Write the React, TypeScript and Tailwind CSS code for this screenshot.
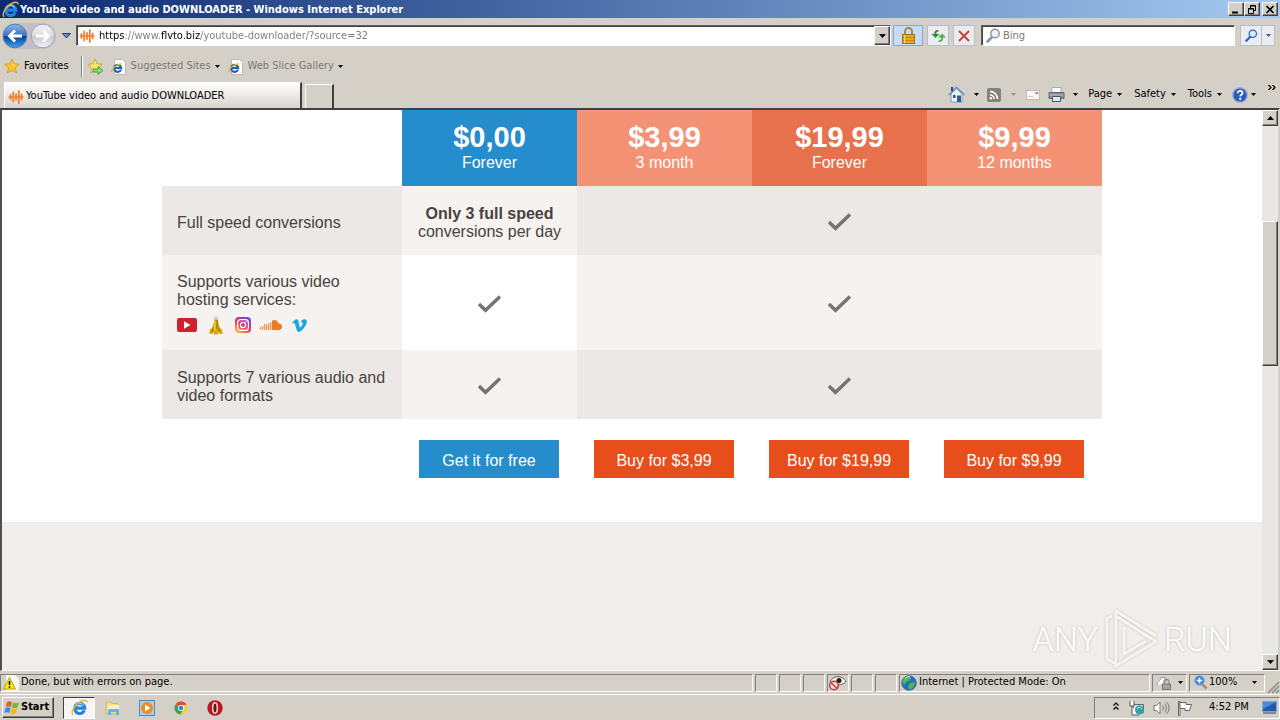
import type { ReactNode } from "react";
import { FaVimeoV } from "react-icons/fa";

/* ---------- icons ---------- */

function IeIcon({ size = 16 }: { size?: number }) {
  return (
    <svg width={size} height={size} viewBox="0 0 16 16" className="shrink-0" aria-hidden="true">
      <path d="M12.6 10.8A4.800 4.800 0 1 1 13 8.600H4.200" fill="none" stroke="#2484e0" strokeWidth="2.900" />
      <path d="M4.200 6.400A4.300 4.300 0 0 1 11.800 6" fill="none" stroke="#8fd2fb" strokeWidth="1.100" />
      <path d="M2 14.800C-.6 12.800 3 6.400 7.600 3.200 11.400.6 15.400.2 15 3.400" fill="none" stroke="#f2b824" strokeWidth="1.300" />
    </svg>
  );
}

function IePage() {
  return (
    <svg width="16" height="16" viewBox="0 0 16 16" className="shrink-0" aria-hidden="true">
      <path d="M3.500.5h8l3 3v12h-11z" fill="#fff" stroke="#b9b9b9" />
      <path d="M10 10.600A3.500 3.500 0 1 1 10.200 9H3.400" fill="none" stroke="#1b64b8" strokeWidth="2.200" />
      <path d="M1 13.500C0 11 4 6 10.500 4.600" fill="none" stroke="#e7b42c" strokeWidth="1.200" />
    </svg>
  );
}

function WaveIcon() {
  return (
    <svg width="16" height="16" viewBox="0 0 16 16" className="shrink-0" aria-hidden="true">
      <path d="M2.500 6v4M5.200 3.500v9M8 5v6M10.800 2v12M13.500 5.500v5" stroke="#f08030" strokeWidth="1.800" strokeLinecap="round" />
      <path d="M.5 8h15" stroke="#f08030" strokeWidth="1.600" />
    </svg>
  );
}

function Star({ arrow = false }: { arrow?: boolean }) {
  return (
    <svg width="17" height="17" viewBox="0 0 17 17" className="shrink-0" aria-hidden="true">
      <path d="M8 1l2.100 4.800 5.200.5-3.900 3.500 1.200 5.200L8 12.300 3.400 15l1.200-5.200L.7 6.300l5.200-.5z" fill={arrow ? "#f6e36a" : "#fcc52f"} stroke={arrow ? "#c9a53a" : "#d89a22"} strokeWidth=".9" />
      <path d="M8 3.200l1.300 3.300 3 .4-3.300.6z" fill="#fff3b0" />
      {arrow && <path d="M6 11h5V8.500l5 4-5 4V14H6z" fill="#7fe06a" stroke="#2f9a33" strokeWidth=".8" />}
    </svg>
  );
}

function Caret({ tone = "text-black" }: { tone?: string }) {
  return (
    <svg width="5" height="3" viewBox="0 0 5 3" className={`shrink-0 ${tone}`} aria-hidden="true">
      <path d="M0 0h5L2.500 3z" fill="currentColor" />
    </svg>
  );
}

function RoundArrow({ forward = false }: { forward?: boolean }) {
  return (
    <svg width="26" height="26" viewBox="0 0 26 26" aria-hidden="true">
      <defs>
        <linearGradient id={forward ? "fwd" : "bck"} x1="0" y1="0" x2="0" y2="1">
          <stop offset="0" stopColor={forward ? "#f2f2f6" : "#8fb7e8"} />
          <stop offset=".48" stopColor={forward ? "#dcdce2" : "#3b74c4"} />
          <stop offset=".52" stopColor={forward ? "#c4c6d2" : "#0d3f96"} />
          <stop offset="1" stopColor={forward ? "#f4f4f8" : "#3fa4ee"} />
        </linearGradient>
      </defs>
      <circle cx="13" cy="13" r="11.800" fill={forward ? "url(#fwd)" : "url(#bck)"} stroke={forward ? "#9fa4b4" : "#5a78b0"} />
      <path d={forward ? "M6 13h12M13 7.500l5.500 5.500-5.500 5.500" : "M20 13H8M13 7.500L7.500 13l5.500 5.500"} fill="none" stroke="#fff" strokeWidth="2.800" />
    </svg>
  );
}

function Magnifier({ color = "#2d62c8", glass = "#dcecff", size = 15 }: { color?: string; glass?: string; size?: number }) {
  return (
    <svg width={size} height={size} viewBox="0 0 15 15" className="shrink-0" aria-hidden="true">
      <path d="M1.500 13.500L6 9" stroke={color} strokeWidth="2.600" strokeLinecap="round" />
      <circle cx="9" cy="5.500" r="4.200" fill={glass} stroke={color} strokeWidth="1.400" />
    </svg>
  );
}

function Check() {
  return (
    <svg width="24" height="18" viewBox="0 0 24 18" className="mx-auto mt-[3px] block" role="img" aria-label="Included">
      <path d="M1 9L7.500 15.300 22 1.400" fill="none" stroke="#777371" strokeWidth="3.400" />
    </svg>
  );
}

function HostingIcons() {
  return (
    <div className="mt-2 flex h-4 items-center">
      <svg width="20" height="14" viewBox="0 0 20 14" aria-hidden="true">
        <rect width="20" height="14" rx="2" fill="#cf2030" />
        <path d="M7 3.300v7.400L13.500 7z" fill="#fff" />
      </svg>
      <svg width="14" height="20" viewBox="0 0 14 20" className="ml-3" aria-hidden="true">
        <path d="M4.500 3L7 .8 9.500 3v2h-5z" fill="#d4d4d0" />
        <path d="M5.500 4.500h3l1.500 6 1.200 2.500 2.300 2.500V19h-3l-.5-2.500L9 19.500H5L4 16.500 3.500 19h-3v-3.500L2.800 13 4 10.500z" fill="#d3a90f" />
        <path d="M8.200 5v9M3.800 13.500V17M10.200 13.500V17" stroke="#7d640c" strokeWidth=".9" />
        <path d="M5.800 6v10" stroke="#f7dd4e" />
      </svg>
      <svg width="16" height="16" viewBox="0 0 16 16" className="ml-3" aria-hidden="true">
        <defs>
          <linearGradient id="insta" x1=".2" y1="1" x2=".8" y2="0">
            <stop offset="0" stopColor="#fdb94a" />
            <stop offset=".4" stopColor="#ee4556" />
            <stop offset=".7" stopColor="#c034a8" />
            <stop offset="1" stopColor="#5a4fd8" />
          </linearGradient>
        </defs>
        <rect width="16" height="16" rx="4" fill="url(#insta)" />
        <rect x="2.600" y="2.600" width="10.800" height="10.800" rx="3" fill="none" stroke="#fff" strokeWidth="1.200" />
        <circle cx="8" cy="8" r="2.600" fill="none" stroke="#fff" strokeWidth="1.200" />
        <circle cx="11.200" cy="4.800" r=".7" fill="#fff" />
      </svg>
      <svg width="22" height="12" viewBox="0 0 22 12" className="ml-[9px]" aria-hidden="true">
        <path d="M.7 8v2.500M2.700 7v4M4.700 5v6M6.700 5v6M8.700 4.500V11M10.700 3v8" stroke="#ea8a3c" strokeWidth="1.100" />
        <path d="M12 11V1.500C15 0 18 1.600 18.500 4.600 20.500 4.200 22 5.800 22 7.700 22 9.600 20.600 11 18.800 11z" fill="#ea7d28" />
      </svg>
      <FaVimeoV size={17} className="ml-[9px] text-[#21a6e4]" aria-hidden="true" />
    </div>
  );
}

/* ---------- browser chrome ---------- */

const RAISED = "border border-t-white border-l-white border-r-[#404040] border-b-[#404040] bg-[#d4d0c8] shadow-[inset_-1px_-1px_0_#808080]";

function CaptionButton({ label, children }: { label: string; children: ReactNode }) {
  return (
    <button aria-label={label} className={`flex h-3.5 w-4 items-center justify-center ${RAISED}`}>
      <svg width="10" height="9" viewBox="0 0 10 9" stroke="#000" fill="none" aria-hidden="true">{children}</svg>
    </button>
  );
}

function TitleBar() {
  return (
    <header className="flex h-[18px] shrink-0 items-center bg-linear-to-r from-[#0d2870] to-[#a6caf0] px-0.5">
      <IeIcon size={17} />
      <h1 className="flex-1 pl-px pt-0.5 text-[11px] font-bold text-white">YouTube video and audio DOWNLOADER - Windows Internet Explorer</h1>
      <CaptionButton label="Minimize"><path d="M1 7.500h6" strokeWidth="2" /></CaptionButton>
      <CaptionButton label="Restore"><path d="M3.500 3V.5h5v5H7M3.500 1h5M1.500 3.500h5v5h-5zM1 4h6" /></CaptionButton>
      <span className="w-0.5" />
      <CaptionButton label="Close"><path d="M1.500 1l7 7M8.500 1l-7 7" strokeWidth="1.700" /></CaptionButton>
    </header>
  );
}

const FIELD = "border border-t-[#606060] border-l-[#606060] border-r-white border-b-white bg-white shadow-[inset_1px_1px_0_#404040]";
const NAVBTN = "flex h-[21px] items-center justify-center border border-[#b9bdc9] bg-[#ebebf0]";

function NavRow() {
  return (
    <div className="flex h-[35px] shrink-0 items-center pl-0.5 pr-[5px]">
      <div className="flex items-center gap-0.5 rounded-full bg-[#c2c0c6]">
        <button aria-label="Back"><RoundArrow /></button>
        <button aria-label="Forward"><RoundArrow forward /></button>
      </div>
      <button aria-label="Recent pages" className="flex w-5 justify-center">
        <svg width="9" height="6" viewBox="0 0 9 6" aria-hidden="true"><path d="M.5.5h8l-4 4.500z" fill="#4a8fd0" stroke="#1f3f70" /></svg>
      </button>
      <form className={`flex h-[21px] flex-1 items-center pl-0.5 ${FIELD}`} onSubmit={(e) => e.preventDefault()}>
        <WaveIcon />
        <input
          aria-label="Address"
          defaultValue="https://www.flvto.biz/youtube-downloader/?source=32"
          className="min-w-0 flex-1 bg-[linear-gradient(90deg,#000_0_29px,#7a7a7a_29px_65px,#000_65px_105px,#7a7a7a_105px)] bg-clip-text pl-1 pt-0.5 text-[11px] text-transparent outline-none"
        />
        <button type="button" aria-label="Show address list" className={`flex h-[19px] w-4 items-center justify-center ${RAISED}`}>
          <svg width="7" height="4" viewBox="0 0 7 4" aria-hidden="true"><path d="M0 0h7L3.500 4z" /></svg>
        </button>
      </form>
      <button aria-label="Security report" className="ml-0.5 flex h-[21px] w-[30px] items-center justify-center border border-[#86a8dc] bg-[#c8dcf8]">
        <svg width="15" height="17" viewBox="0 0 15 17" aria-hidden="true">
          <path d="M4 8V4.500a3.500 3.500 0 0 1 7 0V8" fill="none" stroke="#a98a3c" strokeWidth="2" />
          <rect x="1.500" y="7.500" width="12" height="9" fill="#e8a91c" stroke="#a87212" />
          <path d="M2 10.500h11M2 13.500h11" stroke="#bd8416" />
          <path d="M3.500 8v8" stroke="#ffe28a" />
        </svg>
      </button>
      <button aria-label="Refresh" className={`ml-1 w-[22px] ${NAVBTN}`}>
        <svg width="15" height="14" viewBox="0 0 15 14" aria-hidden="true">
          <path d="M7.500 1C4.800.5 3.300 2 3.300 5H.5l4 4 4-4H5.300c0-1.500.6-2.500 2.200-2.500z" fill="#2f8f35" />
          <path d="M7.500 13c2.700.5 4.700-1 4.700-4.500H15l-4-4-4 4h3.200c0 2-.8 3-2.700 3z" fill="#4fb450" />
        </svg>
      </button>
      <button aria-label="Stop" className={`ml-1 w-[22px] ${NAVBTN}`}>
        <svg width="12" height="12" viewBox="0 0 12 12" stroke="#c8423c" strokeWidth="2" aria-hidden="true"><path d="M1 1l10 10M11 1L1 11" /></svg>
      </button>
      <div className={`ml-1.5 flex h-[21px] w-[254px] items-center pl-1 ${FIELD}`}>
        <Magnifier color="#8596ac" glass="#eef3f9" />
        <input aria-label="Search" placeholder="Bing" className="min-w-0 flex-1 pl-0.5 pt-0.5 text-[11px] outline-none placeholder:text-[#777]" />
      </div>
      <button aria-label="Search the web" className={`ml-[5px] w-[22px] ${NAVBTN}`}><Magnifier size={13} /></button>
      <button aria-label="Search options" className={`w-[13px] border-l-0 ${NAVBTN}`}><Caret tone="text-[#2c5f9f]" /></button>
    </div>
  );
}

function FavoritesRow() {
  return (
    <nav aria-label="Favorites" className="flex h-[26px] shrink-0 items-center pl-1 pt-px text-[11px]">
      <button className="flex items-center gap-[3px]"><Star />Favorites</button>
      <span className="ml-3 h-[21px] w-0.5 border-l border-[#808080] bg-white" />
      <button aria-label="Add to favorites bar" className="ml-1"><Star arrow /></button>
      <button className="ml-[7px] flex items-center gap-1 text-[#7a7873]"><IePage />Suggested Sites<Caret /></button>
      <button className="ml-2 flex items-center gap-1 text-[#7a7873]"><IePage />Web Slice Gallery<Caret /></button>
    </nav>
  );
}

function TabRow() {
  return (
    <div className="flex h-[29px] shrink-0 items-end pl-1">
      <button className="flex h-[26px] w-[298px] items-center gap-0.5 border-r-2 border-r-[#404040] border-l border-t border-l-white border-t-white bg-linear-to-b from-white to-[#d8d5ce] pl-[3px] pt-0.5 text-[11px]">
        <WaveIcon />YouTube video and audio DOWNLOADER
      </button>
      <button aria-label="New tab" className="ml-[3px] h-6 w-[29px] border-l border-r-2 border-t border-l-white border-r-[#404040] border-t-white" />
      <div className="flex h-[29px] flex-1 items-center justify-end pr-1 pt-0.5 text-[11px]">
        <button aria-label="Home" className="flex items-center gap-2">
          <svg width="18" height="17" viewBox="0 0 18 17" aria-hidden="true">
            <path d="M3 8v8h11V8L8.500 2.500z" fill="#eef4fc" stroke="#7e98c0" />
            <path d="M.8 9L8.500 1.200 16.500 9" fill="none" stroke="#6f90c4" strokeWidth="1.500" />
            <path d="M3 1h2v4H3z" fill="#26466e" /><path d="M9 9.500h4V16H9z" fill="#2a6094" /><path d="M5 9h2.500v3H5z" fill="#34537c" />
          </svg>
          <Caret />
        </button>
        <button aria-label="Feeds" className="ml-2 flex items-center gap-2.5">
          <svg width="14" height="14" viewBox="0 0 14 14" aria-hidden="true">
            <rect width="14" height="14" rx="2" fill="#85837f" />
            <path d="M3 7a4 4 0 0 1 4 4M3 3.500a7.500 7.500 0 0 1 7.500 7.500" fill="none" stroke="#fff" strokeWidth="1.600" /><circle cx="3.800" cy="10.300" r="1.200" fill="#fff" />
          </svg>
          <Caret tone="text-[#9a968e]" />
        </button>
        <button aria-label="Read mail" className="ml-2.5">
          <svg width="14" height="10" viewBox="0 0 14 10" className="block" aria-hidden="true"><rect x=".5" y=".5" width="13" height="9" fill="#faf8f7" stroke="#c7b8b8" /><path d="M9.500 2h2.500v2H9.500z" fill="#d46868" /><path d="M2 6.500h5" stroke="#c9c9c9" /></svg>
        </button>
        <button aria-label="Print" className="ml-2 flex items-center gap-2">
          <svg width="17" height="15" viewBox="0 0 17 15" aria-hidden="true">
            <path d="M4 .5h9V6H4z" fill="#fff" stroke="#aaa" /><path d="M1 5.500h15v6H1z" fill="#8a8d93" stroke="#64676d" /><path d="M1.500 8h14" stroke="#b9bdc4" /><path d="M4.500 9.500h8v5h-8z" fill="#dceafa" stroke="#555" />
          </svg>
          <Caret />
        </button>
        <button className="ml-2.5 flex items-center gap-[5px]">Page<Caret /></button>
        <button className="ml-3 flex items-center gap-[5px]">Safety<Caret /></button>
        <button className="ml-3 flex items-center gap-[5px]">Tools<Caret /></button>
        <button aria-label="Help" className="ml-2.5 flex items-center gap-[3px]">
          <svg width="16" height="16" viewBox="0 0 16 16" aria-hidden="true">
            <circle cx="8" cy="8" r="7.300" fill="#2a5cb8" stroke="#9fb0d4" strokeWidth="1.400" />
            <path d="M5.700 6.200c0-3.200 4.800-3 4.800-.2 0 1.700-2.300 1.700-2.300 3.500" fill="none" stroke="#fff" strokeWidth="1.800" /><circle cx="8.200" cy="11.900" r="1.100" fill="#fff" />
          </svg>
          <Caret />
        </button>
        <button aria-label="More commands" className="mb-3.5 ml-3">
          <svg width="8" height="5" viewBox="0 0 8 5" className="block" fill="none" stroke="#000" strokeWidth="1.200" aria-hidden="true"><path d="M.5 0L3 2.500.500 5M4.500 0L7 2.500 4.500 5" /></svg>
        </button>
      </div>
    </div>
  );
}

/* ---------- page ---------- */

const PLANS = [
  { price: "$0,00", term: "Forever", head: "bg-[#268dcd]", action: "Get it for free", button: "bg-[#268dcd]" },
  { price: "$3,99", term: "3 month", head: "bg-[#f49276]", action: "Buy for $3,99", button: "bg-[#e84e1b]" },
  { price: "$19,99", term: "Forever", head: "bg-[#e8714d]", action: "Buy for $19,99", button: "bg-[#e84e1b]" },
  { price: "$9,99", term: "12 months", head: "bg-[#f49276]", action: "Buy for $9,99", button: "bg-[#e84e1b]" },
];

function PricingTable() {
  return (
    <table className="mx-auto w-[940px] table-fixed border-collapse text-base leading-[18px] text-[#474341]">
      <colgroup>
        <col className="w-60" /><col /><col /><col /><col />
      </colgroup>
      <thead>
        <tr className="h-[76px]">
          <td />
          {PLANS.map((p) => (
            <th key={p.action} scope="col" className={`px-0 pb-1 pt-0 text-center font-normal text-white ${p.head}`}>
              <div className="text-[29px] font-bold leading-[34px]">{p.price}</div>
              <div>{p.term}</div>
            </th>
          ))}
        </tr>
      </thead>
      <tbody>
        <tr className="h-[69px] bg-[#ece8e5]">
          <th scope="row" className="px-[15px] py-0 pt-1 text-left font-normal">Full speed conversions</th>
          <td className="bg-[#f5f2ef] p-0 pt-1 text-center"><b>Only 3 full speed</b><br />conversions per day</td>
          <td colSpan={3} className="p-0"><Check /></td>
        </tr>
        <tr className="h-[95px] bg-[#f5f2ef]">
          <th scope="row" className="px-[15px] py-0 pt-px text-left font-normal">Supports various video<br />hosting services:<HostingIcons /></th>
          <td className="bg-white p-0"><Check /></td>
          <td colSpan={3} className="p-0"><Check /></td>
        </tr>
        <tr className="h-[69px] bg-[#ece8e5]">
          <th scope="row" className="px-[15px] py-0 pt-1 text-left font-normal">Supports 7 various audio and video formats</th>
          <td className="bg-[#f5f2ef] p-0"><Check /></td>
          <td colSpan={3} className="p-0"><Check /></td>
        </tr>
      </tbody>
      <tfoot>
        <tr>
          <td />
          {PLANS.map((p) => (
            <td key={p.action} className="pb-11 pl-[17px] pr-[18px] pt-[21px]">
              <button className={`block h-[38px] w-full pt-1 text-white ${p.button}`}>{p.action}</button>
            </td>
          ))}
        </tr>
      </tfoot>
    </table>
  );
}

function ScrollBar() {
  const arrow = `flex h-4 w-4 shrink-0 items-center justify-center ${RAISED}`;
  return (
    <div className="flex w-4 shrink-0 flex-col bg-[#e9e7e3]">
      <button aria-label="Scroll up" className={arrow}><svg width="7" height="4" viewBox="0 0 7 4" aria-hidden="true"><path d="M0 4h7L3.500 0z" /></svg></button>
      <div className="flex-[95]" />
      <div className={`flex-[144] ${RAISED}`} />
      <div className="flex-[289]" />
      <button aria-label="Scroll down" className={arrow}><svg width="7" height="4" viewBox="0 0 7 4" aria-hidden="true"><path d="M0 0h7L3.500 4z" /></svg></button>
    </div>
  );
}

function Watermark() {
  return (
    <div className="absolute bottom-0 right-[46px] flex items-center gap-1 font-[Roboto,'Liberation_Sans',sans-serif] text-[34px] font-light leading-[60px] text-white [text-shadow:0_0_3px_#bdbab7]">
      <span>ANY</span>
      <svg width="58" height="62" viewBox="0 0 58 62" fill="none" className="drop-shadow-[0_0_1px_#b5b2af]" aria-hidden="true">
        <path d="M10 8L5 10.500V51L14 56M14 57V3L54 28M14 8L53 33M22 19V46L44 33M12 59L55 33" stroke="#fff" strokeWidth="3" strokeLinejoin="round" opacity=".8" />
      </svg>
      <span>RUN</span>
    </div>
  );
}

/* ---------- status bar and taskbar ---------- */

const PANEL = "flex h-[18px] items-center border border-t-[#808080] border-l-[#808080] border-r-white border-b-white";

function StatusBar() {
  return (
    <footer className="flex h-[23px] shrink-0 items-center gap-0.5 text-[11px]">
      <div className={`flex-1 gap-0.5 pl-0.5 ${PANEL}`}>
        <svg width="16" height="16" viewBox="0 0 16 16" aria-hidden="true"><path d="M3 0h9l4 4v12H3z" fill="#f7f7f4" /><path d="M6.500 2.500L12.500 14H.5z" fill="#f8e81c" stroke="#b8a20c" /><path d="M6.500 6v4M6.500 11.300v1.400" stroke="#000" strokeWidth="1.500" /></svg>
        Done, but with errors on page.
      </div>
      <div className={`w-[22px] ${PANEL}`} />
      <div className={`w-[22px] ${PANEL}`} />
      <div className={`w-[22px] ${PANEL}`} />
      <div className={`w-[22px] ${PANEL}`}>
        <svg width="19" height="16" viewBox="0 0 19 16" aria-hidden="true">
          <path d="M2 6.500C6 0 14 0 18 6.500 14 11 6 11 2 6.500z" fill="#fff" stroke="#555" /><circle cx="11" cy="5.500" r="2.600" fill="#222" />
          <circle cx="6" cy="10.500" r="4.300" fill="#f5e2e0" stroke="#c8403c" strokeWidth="1.600" /><path d="M3 7.500l6 6" stroke="#c8403c" strokeWidth="1.600" />
        </svg>
      </div>
      <div className={`w-[22px] ${PANEL}`} />
      <div className={`w-[22px] ${PANEL}`} />
      <div className={`w-[251px] gap-0.5 pl-px ${PANEL}`}>
        <svg width="16" height="16" viewBox="0 0 16 16" aria-hidden="true"><circle cx="8" cy="8" r="7.300" fill="#2270c0" stroke="#3a74ac" /><path d="M3 3c3-2 6-2 7 0L8 6 5 7 3.500 10 1.200 7zM9 8l5-1-1 4-4 4-2-3z" fill="#52b848" /><path d="M4 3.500a6 6 0 0 1 5-2" stroke="#c8e8fa" fill="none" /></svg>
        Internet | Protected Mode: On
      </div>
      <button aria-label="Protected mode settings" className={`w-[35px] justify-center gap-1.5 ${PANEL}`}>
        <svg width="16" height="14" viewBox="0 0 16 14" aria-hidden="true"><path d="M1 9C1 5 4 6 5 1.500h4V7" fill="#fff" stroke="#9a9a9a" /><path d="M8 8V6a2.500 2.500 0 0 1 5 0v2" fill="none" stroke="#8a8a8a" strokeWidth="1.300" /><path d="M6.500 8h8v5.500h-8z" fill="#a3a3a3" stroke="#747474" /></svg>
        <Caret />
      </button>
      <button className={`w-[76px] gap-px pl-1 ${PANEL}`}>
        <svg width="14" height="15" viewBox="0 0 14 15" aria-hidden="true"><path d="M8 9l4.500 4.500" stroke="#a8905c" strokeWidth="2.500" /><circle cx="5.500" cy="5.500" r="4.800" fill="#3a86dc" stroke="#84aede" /><path d="M5.500 2.800v5.400M2.800 5.500h5.400" stroke="#fff" strokeWidth="1.500" /></svg>
        <span className="flex-1 text-left">100%</span>
        <span className="pr-[7px]"><Caret /></span>
      </button>
      <svg width="13" height="14" viewBox="0 0 13 14" className="self-end" stroke="#8b8780" strokeWidth="1.500" aria-hidden="true"><path d="M1 13L12 2M5 13l7-7M9 13l3-3" /></svg>
    </footer>
  );
}

function TaskBar() {
  return (
    <div className="flex h-[26px] shrink-0 items-center border-t border-white pl-0.5 text-[11px]">
      <button className={`flex h-[21px] w-[52px] items-center gap-px pl-px font-bold ${RAISED}`}>
        <svg width="16" height="16" viewBox="0 0 16 16" aria-hidden="true">
          <path d="M3 2c2-1 3-1 5 0L6.800 7c-2-1-3-1-5 0z" fill="#e85a26" /><path d="M9 2.500c2 1 4 1 6 0L13.500 7.500c-2 1-4 1-5.700 0z" fill="#78b82c" />
          <path d="M1.500 8c2-1 3-1 5 0L5.300 13c-2-1-3-1-5 0z" fill="#3b8fd8" /><path d="M7.500 8.500c2 1 4 1 5.800 0L12 13.500c-2 1-4 1-5.800 0z" fill="#f6b81e" />
        </svg>
        Start
      </button>
      <button aria-label="Internet Explorer" className="ml-[9px] flex h-[22px] w-8 items-center justify-center border border-b-white border-l-[#404040] border-r-white border-t-[#404040] bg-[#f6f5f3]"><IeIcon size={17} /></button>
      <button aria-label="File explorer" className="ml-2.5 flex w-4 justify-center">
        <svg width="16" height="16" viewBox="0 0 16 16" aria-hidden="true"><path d="M1 2h5l1 1.500h6V14H1z" fill="#f3dc82" stroke="#d5b75a" /><path d="M3 5h11v5H3z" fill="#fbf0bf" /><path d="M3 15v-4.500c0-1 .5-1.500 1.500-1.500h8c1 0 1.500.5 1.500 1.500V15h-3v-3H6v3z" fill="#62b3e6" /></svg>
      </button>
      <button aria-label="Media player" className="ml-[18px] flex w-4 justify-center">
        <svg width="16" height="16" viewBox="0 0 16 16" aria-hidden="true"><rect x=".5" y=".5" width="15" height="15" fill="#a7d0f0" stroke="#4a8ac6" /><circle cx="8" cy="8" r="6" fill="#f48a1c" /><path d="M6 4.500v7L11.500 8z" fill="#fff" /></svg>
      </button>
      <button aria-label="Chrome" className="ml-[18px] flex w-4 justify-center">
        <svg width="14" height="14" viewBox="0 0 16 16" aria-hidden="true"><circle cx="8" cy="8" r="7.500" fill="#f9cf36" /><path d="M8 8L1.500 4.250A7.500 7.500 0 0 1 14.500 4.250L8 4.500z" fill="#de4a3c" /><path d="M1.500 4.250A7.500 7.500 0 0 0 7.500 15.500L10.500 10 8 8z" fill="#38a458" /><circle cx="8" cy="8" r="3.500" fill="#fff" /><circle cx="8" cy="8" r="2.700" fill="#3f7fe8" /></svg>
      </button>
      <button aria-label="Opera" className="ml-[18px] flex w-4 justify-center">
        <svg width="16" height="16" viewBox="0 0 16 16" aria-hidden="true"><circle cx="8" cy="8" r="7.700" fill="#b8181f" /><ellipse cx="8" cy="8" rx="2.300" ry="5.200" fill="#7c0a10" stroke="#f6dada" strokeWidth="1.500" /></svg>
      </button>
      <div className="flex-1" />
      <div className="flex h-[22px] w-[186px] items-center border border-b-white border-l-[#808080] border-r-white border-t-[#808080] pl-[18px]">
        <svg width="6" height="8" viewBox="0 0 6 8" className="mb-1" fill="none" stroke="#000" strokeWidth="1.200" aria-hidden="true"><path d="M.5 3.500L3 1l2.500 2.500M.5 7.500L3 5l2.500 2.500" /></svg>
        <svg width="16" height="16" viewBox="0 0 16 16" className="ml-2.5" aria-hidden="true"><path d="M4.500 4.500h10v8h-10z" fill="#cfe7ec" stroke="#5b6a6e" /><path d="M1 1v5h4V1M3 6v9h7" fill="#fff" stroke="#555" /><circle cx="10.500" cy="10" r="4.500" fill="#3c9fae" /><path d="M8 9c2-3 4-1 5 0" stroke="#bdeef0" fill="none" /></svg>
        <svg width="17" height="16" viewBox="0 0 17 16" className="ml-2" fill="none" stroke="#777" aria-hidden="true"><path d="M1 5.500h2.500L7 2v12l-3.500-3.500H1z" fill="#fff" /><path d="M9.500 5.500c1.300 1.500 1.300 3.500 0 5M11.500 3.500c2.300 2.500 2.300 6.500 0 9M13.500 2c3.300 3.500 3.300 8.500 0 12" /></svg>
        <svg width="16" height="16" viewBox="0 0 16 16" className="ml-[7px]" fill="#fff" stroke="#666" aria-hidden="true"><path d="M1.500 1.500h1.500v14H1.500z" /><path d="M3 2.500h6v2h5.500l-2 6H8v-2H3z" /></svg>
        <span className="ml-4 flex-1">4:52 PM</span>
        <button aria-label="Show desktop" className="pr-0.5">
          <svg width="15" height="13" viewBox="0 0 15 13" aria-hidden="true"><path d="M.5.5h14v10H.5z" fill="#2459a8" stroke="#7aa5dc" /><path d="M1 1h13L1 8z" fill="#4d8ad6" /><path d="M1 12h13" stroke="#26466e" /></svg>
        </button>
      </div>
    </div>
  );
}

export default function App() {
  return (
    <div className="flex h-screen flex-col overflow-hidden bg-[#d4d0c8] font-['DejaVu_Sans_Condensed','DejaVu_Sans',sans-serif] text-black">
      <TitleBar />
      <NavRow />
      <FavoritesRow />
      <TabRow />
      <div className="relative flex min-h-0 flex-1 border-b border-l-2 border-r-2 border-t-2 border-b-white border-l-[#505050] border-r-[#d4d0c8] border-t-[#404040]">
        <main className="min-w-0 flex-1 overflow-hidden bg-[#f0edea] font-['Liberation_Sans',Arial,sans-serif]">
          <section className="bg-white"><PricingTable /></section>
        </main>
        <ScrollBar />
        <Watermark />
      </div>
      <StatusBar />
      <TaskBar />
    </div>
  );
}
